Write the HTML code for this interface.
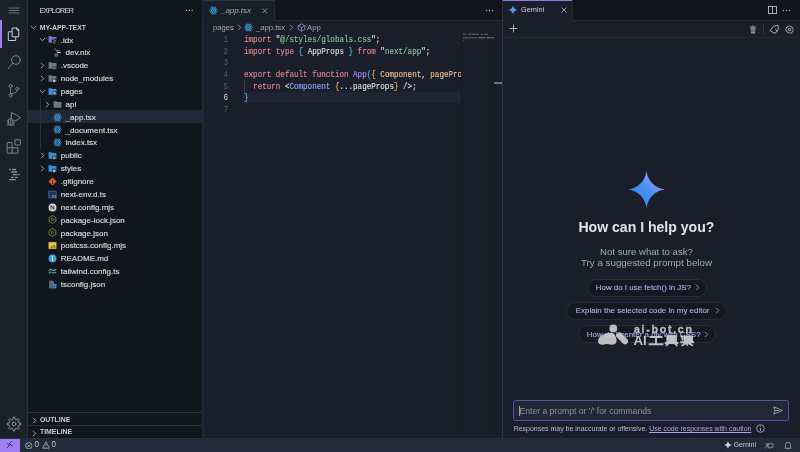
<!DOCTYPE html>
<html><head><meta charset="utf-8"><style>
*{box-sizing:border-box;margin:0;padding:0}
html,body{width:800px;height:452px;overflow:hidden;background:#1a1e2a;font-family:"Liberation Sans",sans-serif;}
.a{position:absolute}
.t{position:absolute;white-space:pre;line-height:1}
.row{position:absolute;white-space:pre;font-size:8px;color:#cdd0d6;line-height:12px;-webkit-text-stroke:.2px currentColor}
.code{position:absolute;left:244px;font-family:"Liberation Mono",monospace;font-size:9.2px;line-height:11.7px;white-space:pre;color:#d4d4d4;transform:scaleX(.824);transform-origin:0 0;-webkit-text-stroke:.15px currentColor}
.ln{position:absolute;left:199px;width:29px;text-align:right;font-family:"Liberation Mono",monospace;font-size:9.2px;line-height:11.7px;color:#596071;transform:scaleX(.824);transform-origin:100% 0}
.k{color:#e0848d}.s{color:#7fc79a}.b{color:#5eaee8}.w{color:#dcdfe4}.f{color:#b28cf3}.y{color:#e4b35c}.o{color:#e6c08e}.c{color:#8ea6f4}
</style></head><body><div id="root" style="position:absolute;left:0;top:0;width:800px;height:452px;will-change:transform">
<svg width="0" height="0" style="position:absolute"><defs>
<symbol id="react" viewBox="0 0 16 16"><g fill="none" stroke="#45a4e6" stroke-width="1.25"><ellipse cx="8" cy="8" rx="7.2" ry="2.9"/><ellipse cx="8" cy="8" rx="7.2" ry="2.9" transform="rotate(60 8 8)"/><ellipse cx="8" cy="8" rx="7.2" ry="2.9" transform="rotate(120 8 8)"/></g><circle cx="8" cy="8" r="1.2" fill="#45a4e6"/></symbol>
<symbol id="fgray" viewBox="0 0 16 16"><path d="M1 2.2h5.2l1.5 1.5H15V13.8H1z" fill="#6f7684"/></symbol>
<symbol id="fidx" viewBox="0 0 16 16"><path d="M1 2.2h5.2l1.5 1.5H15V13.8H1z" fill="#8b6fd8"/><circle cx="11.3" cy="10.8" r="4.6" fill="#11151c"/><path d="M8.6 7.6l5 2.4" stroke="#3fb6c9" stroke-width="1.5"/><path d="M13.6 10.4l-5 2.4" stroke="#5fae5a" stroke-width="1.5"/><path d="M9.5 14.3h4" stroke="#e2b34c" stroke-width="1.2"/></symbol>
<symbol id="nix" viewBox="0 0 16 16"><rect x="2" y="1" width="3" height="2" fill="#7e68d8"/><rect x="5" y="4" width="7" height="2" fill="#4aa8e8"/><rect x="7" y="7" width="7" height="2" fill="#e8b34a"/><rect x="3" y="10" width="6" height="2" fill="#48a868"/><rect x="2" y="13" width="7" height="2" fill="#7e68d8"/></symbol>
<symbol id="fvs" viewBox="0 0 16 16"><path d="M1 2.2h5.2l1.5 1.5H15V13.8H1z" fill="#6f7684"/><circle cx="11" cy="12" r="3.6" fill="#131720"/><circle cx="11" cy="12" r="2.2" fill="none" stroke="#c2c6ce" stroke-width="1.3"/></symbol>
<symbol id="fnode" viewBox="0 0 16 16"><path d="M1 2.2h5.2l1.5 1.5H15V13.8H1z" fill="#6f7684"/><circle cx="11" cy="12" r="3.8" fill="#131720"/><path d="M8.5 10.5l2.5-1.5 2.5 1.5v3l-2.5 1.5-2.5-1.5z" fill="#c2c6ce"/></symbol>
<symbol id="fpages" viewBox="0 0 16 16"><path d="M1 2.2h5.2l1.5 1.5H15V13.8H1z" fill="#3d8fd6"/><rect x="8.5" y="8" width="6" height="7" fill="#131720"/><path d="M9.5 9h4v5.5l-2-1.5-2 1.5z" fill="#7fc4f2"/></symbol>
<symbol id="fpublic" viewBox="0 0 16 16"><path d="M1 2.2h5.2l1.5 1.5H15V13.8H1z" fill="#3d8fd6"/><circle cx="11" cy="12" r="4" fill="#131720"/><circle cx="11" cy="12" r="2.8" fill="#7fc4f2"/><path d="M8.5 12h5M11 9.5v5" stroke="#3d6f9a" stroke-width=".7"/></symbol>
<symbol id="fstyles" viewBox="0 0 16 16"><path d="M1 2.2h5.2l1.5 1.5H15V13.8H1z" fill="#3d8fd6"/><circle cx="11" cy="12" r="4" fill="#131720"/><circle cx="11" cy="12" r="2.8" fill="#7fc4f2"/></symbol>
<symbol id="git" viewBox="0 0 16 16"><path d="M8 1l7 7-7 7-7-7z" fill="#e05a2b"/><path d="M6.5 5l3 3M8 8v3.5" stroke="#131720" stroke-width="1.1"/><circle cx="8" cy="11.3" r="1" fill="#131720"/></symbol>
<symbol id="ts" viewBox="0 0 16 16"><rect x="1.5" y="2" width="13" height="12" fill="#1d3550" stroke="#3b78c4" stroke-width="1.3"/><path d="M8 13V9.5h3M9.5 9.5V13M14 9.5h-2v1.7h2V13h-2" stroke="#7fb0e8" stroke-width="1" fill="none"/></symbol>
<symbol id="next" viewBox="0 0 16 16"><circle cx="8" cy="8" r="7" fill="#d6d9de"/><path d="M5.5 11.5v-7l5 7v-7" stroke="#131720" stroke-width="1.4" fill="none"/></symbol>
<symbol id="node" viewBox="0 0 16 16"><path d="M8 1l6 3.5v7L8 15l-6-3.5v-7z" fill="none" stroke="#7aa43c" stroke-width="1.4"/><path d="M6.5 11V5.5c2.5 0 3.5.8 3.5 2s-1 2-3.5 2" stroke="#7aa43c" stroke-width="1.2" fill="none"/></symbol>
<symbol id="js" viewBox="0 0 16 16"><rect x="1" y="2" width="14" height="12" fill="#f0c43c"/><path d="M7 8v4H5M10 12h2v-2h-2V8h2" stroke="#2a2a2a" stroke-width="1.1" fill="none"/></symbol>
<symbol id="info" viewBox="0 0 16 16"><circle cx="8" cy="8" r="7" fill="#3d9be9"/><rect x="7.1" y="6.5" width="1.8" height="5.5" fill="#fff"/><circle cx="8" cy="4.4" r="1.1" fill="#fff"/></symbol>
<symbol id="tw" viewBox="0 0 16 16"><path d="M1.5 7c1.5-3 3.5-3.5 6-1.8s4 1.5 7-1.2M1.5 11.5c1.5-3 3.5-3.5 6-1.8s4 1.5 7-1.2" fill="none" stroke="#4db6ac" stroke-width="1.8"/></symbol>
<symbol id="tscfg" viewBox="0 0 16 16"><path d="M2 1h6l3 3v3H8v8H2z" fill="#5f6675"/><rect x="8" y="7" width="7" height="8" fill="#3d8fd6"/><path d="M9.5 10h3M11 10v4" stroke="#1d3a5a" stroke-width=".9"/></symbol>
</defs></svg>
<div class="a" style="left:0;top:0;width:27px;height:438px;background:#1b202b"></div>
<div class="a" style="left:27px;top:0;width:1px;height:438px;background:#2a2f3b"></div>
<div class="a" style="left:0;top:20px;width:1.6px;height:28px;background:#a27ef5"></div>
<svg class="a" style="left:0;top:0" width="27" height="438" viewBox="0 0 27 438" fill="none" stroke="#7d8492" stroke-width="1" stroke-linejoin="round" stroke-linecap="round">
  <path d="M9 8h10M9 10.5h10M9 13h10" stroke="#6c7382"/>
  <g stroke="#c9cdd5">
    <path d="M12.5 28h4.3l2 2v6.8h-6.3z"/>
    <path d="M16.8 28v2h2"/>
    <path d="M11.7 31.8h-3.4v8.7h7.4v-3.1"/>
  </g>
  <circle cx="15.9" cy="60" r="4.3"/>
  <path d="M12.7 63.3L8.2 68.8"/>
  <circle cx="10.6" cy="86" r="1.5"/><circle cx="10.6" cy="95.6" r="1.5"/><circle cx="17.3" cy="88.7" r="1.5"/>
  <path d="M10.6 87.5v6.6M17.3 90.2c0 2.3-1.5 2.6-6.6 3.6"/>
  <path d="M11.3 117.6V112.3l9.4 5.3-5.3 3.3"/>
  <path d="M8.6 119.8a2.4 2.4 0 0 1 4.4 0v3.4a2.2 2.2 0 0 1-4.4 0z M10.8 119.4v5.6M7.2 120.8h1.4M13 120.8h1.4M7.2 122.8h1.4M13 122.8h1.4M7.4 125h1.4M12.8 125h1.4"/>
  <path d="M7.5 142.6h4.6v10.5H7.5zM7.5 147.8h10.4v5.3h-5.8M15.3 139.8h5v5.2h-5z"/>
  <g stroke-width="1.3" stroke="#8b919c">
  <path d="M9.7 169.5h.6M12.5 169.5h3M11.5 172h5.3M13.4 174.6h3.5M18.6 174.6h.6M11.5 177.3h2M15.6 177.3h1.6M9.7 179.7h5.6"/>
  </g>
  <circle cx="14" cy="424" r="1.9" stroke="#8b919c"/>
  <path d="M13.02 419.10 L13.09 417.26 L14.91 417.26 L14.98 419.10 L16.78 419.84 L18.13 418.59 L19.41 419.87 L18.16 421.22 L18.90 423.02 L20.74 423.09 L20.74 424.91 L18.90 424.98 L18.16 426.78 L19.41 428.13 L18.13 429.41 L16.78 428.16 L14.98 428.90 L14.91 430.74 L13.09 430.74 L13.02 428.90 L11.22 428.16 L9.87 429.41 L8.59 428.13 L9.84 426.78 L9.10 424.98 L7.26 424.91 L7.26 423.09 L9.10 423.02 L9.84 421.22 L8.59 419.87 L9.87 418.59 L11.22 419.84Z" stroke="#8b919c"/>
</svg>
<div class="a" style="left:28px;top:0;width:174px;height:438px;background:#11151c"></div>
<div class="a" style="left:202px;top:0;width:2px;height:438px;background:#222733"></div>
<div class="t" style="left:39.5px;top:7.3px;font-size:7px;letter-spacing:-.55px;color:#bfc3cb;-webkit-text-stroke:.15px currentColor">EXPLORER</div>
<svg class="a" style="left:184px;top:8px" width="10" height="5"><circle cx="2.4" cy="2.4" r=".7" fill="#c0c4cc"/><circle cx="5.3" cy="2.4" r=".7" fill="#c0c4cc"/><circle cx="8.2" cy="2.4" r=".7" fill="#c0c4cc"/></svg>
<div class="a" style="left:28px;top:110.12px;width:174px;height:12.8px;background:#212938"></div>
<div class="a" style="left:40.3px;top:97.76px;width:1px;height:51.44px;background:#2a2f3a"></div>
<svg class="a" style="left:30px;top:25.00px" width="7" height="5"><path d="M.8 1l2.7 2.7L6.2 1" fill="none" stroke="#aeb3bc" stroke-width=".9"/></svg>
<div class="t" style="left:39.7px;top:24.50px;font-size:6.9px;font-weight:bold;color:#c8ccd3">MY-APP-TEXT</div>
<svg class="a" style="left:39.00px;top:37.36px" width="7" height="5"><path d="M.8 1l2.7 2.7L6.2 1" fill="none" stroke="#aeb3bc" stroke-width=".9"/></svg>
<svg class="a" style="left:48.00px;top:35.36px" width="9" height="9"><use href="#fidx"/></svg>
<div class="row" style="left:60.75px;top:34.61px">.idx</div>
<svg class="a" style="left:52.80px;top:48.22px" width="9" height="9"><use href="#nix"/></svg>
<div class="row" style="left:65.55px;top:47.47px">dev.nix</div>
<svg class="a" style="left:40.00px;top:62.08px" width="5" height="7"><path d="M1 .8l2.7 2.7L1 6.2" fill="none" stroke="#aeb3bc" stroke-width=".9"/></svg>
<svg class="a" style="left:48.00px;top:61.08px" width="9" height="9"><use href="#fvs"/></svg>
<div class="row" style="left:60.75px;top:60.33px">.vscode</div>
<svg class="a" style="left:40.00px;top:74.94px" width="5" height="7"><path d="M1 .8l2.7 2.7L1 6.2" fill="none" stroke="#aeb3bc" stroke-width=".9"/></svg>
<svg class="a" style="left:48.00px;top:73.94px" width="9" height="9"><use href="#fnode"/></svg>
<div class="row" style="left:60.75px;top:73.19px">node_modules</div>
<svg class="a" style="left:39.00px;top:88.80px" width="7" height="5"><path d="M.8 1l2.7 2.7L6.2 1" fill="none" stroke="#aeb3bc" stroke-width=".9"/></svg>
<svg class="a" style="left:48.00px;top:86.80px" width="9" height="9"><use href="#fpages"/></svg>
<div class="row" style="left:60.75px;top:86.05px">pages</div>
<svg class="a" style="left:44.80px;top:100.66px" width="5" height="7"><path d="M1 .8l2.7 2.7L1 6.2" fill="none" stroke="#aeb3bc" stroke-width=".9"/></svg>
<svg class="a" style="left:52.80px;top:99.66px" width="9" height="9"><use href="#fgray"/></svg>
<div class="row" style="left:65.55px;top:98.91px">api</div>
<svg class="a" style="left:52.80px;top:112.52px" width="9" height="9"><use href="#react"/></svg>
<div class="row" style="left:65.55px;top:111.77px">_app.tsx</div>
<svg class="a" style="left:52.80px;top:125.38px" width="9" height="9"><use href="#react"/></svg>
<div class="row" style="left:65.55px;top:124.63px">_document.tsx</div>
<svg class="a" style="left:52.80px;top:138.24px" width="9" height="9"><use href="#react"/></svg>
<div class="row" style="left:65.55px;top:137.49px">index.tsx</div>
<svg class="a" style="left:40.00px;top:152.10px" width="5" height="7"><path d="M1 .8l2.7 2.7L1 6.2" fill="none" stroke="#aeb3bc" stroke-width=".9"/></svg>
<svg class="a" style="left:48.00px;top:151.10px" width="9" height="9"><use href="#fpublic"/></svg>
<div class="row" style="left:60.75px;top:150.35px">public</div>
<svg class="a" style="left:40.00px;top:164.96px" width="5" height="7"><path d="M1 .8l2.7 2.7L1 6.2" fill="none" stroke="#aeb3bc" stroke-width=".9"/></svg>
<svg class="a" style="left:48.00px;top:163.96px" width="9" height="9"><use href="#fstyles"/></svg>
<div class="row" style="left:60.75px;top:163.21px">styles</div>
<svg class="a" style="left:48.00px;top:176.82px" width="9" height="9"><use href="#git"/></svg>
<div class="row" style="left:60.75px;top:176.07px">.gitignore</div>
<svg class="a" style="left:48.00px;top:189.68px" width="9" height="9"><use href="#ts"/></svg>
<div class="row" style="left:60.75px;top:188.93px">next-env.d.ts</div>
<svg class="a" style="left:48.00px;top:202.54px" width="9" height="9"><use href="#next"/></svg>
<div class="row" style="left:60.75px;top:201.79px">next.config.mjs</div>
<svg class="a" style="left:48.00px;top:215.40px" width="9" height="9"><use href="#node"/></svg>
<div class="row" style="left:60.75px;top:214.65px">package-lock.json</div>
<svg class="a" style="left:48.00px;top:228.26px" width="9" height="9"><use href="#node"/></svg>
<div class="row" style="left:60.75px;top:227.51px">package.json</div>
<svg class="a" style="left:48.00px;top:241.12px" width="9" height="9"><use href="#js"/></svg>
<div class="row" style="left:60.75px;top:240.37px">postcss.config.mjs</div>
<svg class="a" style="left:48.00px;top:253.98px" width="9" height="9"><use href="#info"/></svg>
<div class="row" style="left:60.75px;top:253.23px">README.md</div>
<svg class="a" style="left:48.00px;top:266.84px" width="9" height="9"><use href="#tw"/></svg>
<div class="row" style="left:60.75px;top:266.09px">tailwind.config.ts</div>
<svg class="a" style="left:48.00px;top:279.70px" width="9" height="9"><use href="#tscfg"/></svg>
<div class="row" style="left:60.75px;top:278.95px">tsconfig.json</div>
<div class="a" style="left:28px;top:412px;width:174px;height:1px;background:#2a2f3b"></div>
<div class="a" style="left:28px;top:425px;width:174px;height:1px;background:#2a2f3b"></div>
<svg class="a" style="left:32px;top:416.90px" width="5" height="7"><path d="M1 .8l2.7 2.7L1 6.2" fill="none" stroke="#aeb3bc" stroke-width=".9"/></svg>
<div class="t" style="left:40px;top:416.80px;font-size:6.9px;font-weight:bold;color:#c8ccd3">OUTLINE</div>
<svg class="a" style="left:32px;top:429.50px" width="5" height="7"><path d="M1 .8l2.7 2.7L1 6.2" fill="none" stroke="#aeb3bc" stroke-width=".9"/></svg>
<div class="t" style="left:40px;top:429.40px;font-size:6.9px;font-weight:bold;color:#c8ccd3">TIMELINE</div>
<div class="a" style="left:203px;top:0;width:299px;height:20px;background:#12151c"></div>
<div class="a" style="left:203px;top:20px;width:299px;height:1px;background:#262b36"></div>
<div class="a" style="left:203px;top:0;width:70.5px;height:21px;background:#1a1e2a"></div>
<div class="a" style="left:203px;top:0;width:70.5px;height:1px;background:#2f3440"></div>
<div class="a" style="left:273.5px;top:0;width:1px;height:20px;background:#262b36"></div>
<svg class="a" style="left:209px;top:5.5px" width="9" height="9"><use href="#react"/></svg>
<div class="t" style="left:221px;top:6.6px;font-size:7.9px;font-style:italic;color:#a3a8b1">_app.tsx</div>
<svg class="a" style="left:262px;top:7.8px" width="5.5" height="5.5"><path d="M.5 .5l4.5 4.5M5 .5l-4.5 4.5" stroke="#a3a8b1" stroke-width=".8"/></svg>
<svg class="a" style="left:485px;top:9px" width="10" height="3"><circle cx="1.5" cy="1.5" r=".7" fill="#b0b4bc"/><circle cx="4.5" cy="1.5" r=".7" fill="#b0b4bc"/><circle cx="7.5" cy="1.5" r=".7" fill="#b0b4bc"/></svg>
<div class="t" style="left:213px;top:23.7px;font-size:7.7px;color:#a2a7b0">pages</div>
<svg class="a" style="left:237px;top:23.5px" width="5" height="7"><path d="M1 .8l2.7 2.7L1 6.2" fill="none" stroke="#9ba0a9" stroke-width=".8"/></svg>
<svg class="a" style="left:244px;top:22.5px" width="9" height="9"><use href="#react"/></svg>
<div class="t" style="left:256px;top:23.7px;font-size:7.7px;color:#a2a7b0">_app.tsx</div>
<svg class="a" style="left:289px;top:23.5px" width="5" height="7"><path d="M1 .8l2.7 2.7L1 6.2" fill="none" stroke="#9ba0a9" stroke-width=".8"/></svg>
<svg class="a" style="left:297px;top:22.5px" width="9" height="9" viewBox="0 0 16 16"><path d="M8 1.5l6 3.2v6.6l-6 3.2-6-3.2V4.7z M2 4.7l6 3.3 6-3.3M8 8v6.5" fill="none" stroke="#b28cf3" stroke-width="1.3"/></svg>
<div class="t" style="left:307px;top:23.7px;font-size:7.7px;color:#a2a7b0">App</div>
<div class="a" style="left:243.4px;top:91.6px;width:218.6px;height:11.7px;background:#1e2535"></div>
<div class="a" style="left:244px;top:80px;width:1px;height:11.6px;background:#3a3f4b"></div>
<div class="a" style="left:460.5px;top:33px;width:1.5px;height:405px;background:#151922"></div>
<div class="a" style="left:493.5px;top:33px;width:1px;height:405px;background:#161a23"></div>
<div class="a" style="left:494px;top:82px;width:8px;height:2px;background:#6a707c"></div>
<div class="ln" style="top:33.90px;color:#596071">1</div>
<div class="code" style="top:33.90px"><span class="k">import</span> <span class="w">"</span><span class="s">@/styles/globals.css</span><span class="w">";</span></div>
<div class="ln" style="top:45.60px;color:#596071">2</div>
<div class="code" style="top:45.60px"><span class="k">import</span> <span class="k">type</span> <span class="b">{</span> <span class="w">AppProps</span> <span class="b">}</span> <span class="k">from</span> <span class="w">"</span><span class="s">next/app</span><span class="w">";</span></div>
<div class="ln" style="top:57.30px;color:#596071">3</div>
<div class="ln" style="top:69.00px;color:#596071">4</div>
<div class="code" style="top:69.00px"><span class="k">export</span> <span class="k">default</span> <span class="k">function</span> <span class="f">App</span><span class="b">(</span><span class="y">{</span> <span class="o">Component</span><span class="w">,</span> <span class="o">pageProps</span> <span class="y">})</span> <span class="b">{</span></div>
<div class="ln" style="top:80.70px;color:#596071">5</div>
<div class="code" style="top:80.70px">  <span class="k">return</span> <span class="w">&lt;</span><span class="c">Component</span> <span class="y">{</span><span class="w">...pageProps</span><span class="y">}</span> <span class="w">/&gt;;</span></div>
<div class="ln" style="top:92.40px;color:#d8dbe0">6</div>
<div class="code" style="top:92.40px"><span class="b">}</span></div>
<div class="ln" style="top:104.10px;color:#596071">7</div>
<div class="a" style="left:461.5px;top:21px;width:40.5px;height:417px;background:#1a1e2a"></div>
<div class="a" style="left:460.5px;top:33px;width:1.5px;height:405px;background:#151922"></div>
<div class="a" style="left:493.5px;top:33px;width:1px;height:405px;background:#161a23"></div>
<div class="a" style="left:494px;top:82px;width:8px;height:2px;background:#6a707c"></div>
<svg class="a" style="left:462px;top:32px" width="32" height="10" opacity=".5"><rect x="1" y="1.6" width="3.5" height="1.4" fill="#b86a74"/><rect x="6" y="1.6" width="3" height="1.4" fill="#5f9f78"/><rect x="9.5" y="1.6" width="4" height="1.4" fill="#8a9a90"/><rect x="14" y="1.6" width="3" height="1.4" fill="#5f9f78"/><rect x="18.5" y="1.6" width="2.5" height="1.4" fill="#b86a74"/><rect x="22" y="1.6" width="4" height="1.4" fill="#5f9f78"/><rect x="1" y="5" width="5" height="1.4" fill="#b86a74"/><rect x="6.5" y="5" width="3" height="1.4" fill="#8d7fc8"/><rect x="10" y="5" width="5" height="1.4" fill="#b86a74"/><rect x="16" y="5" width="7.5" height="1.4" fill="#9aa0a8"/><rect x="24.5" y="5" width="5" height="1.4" fill="#c0a070"/><rect x="30" y="5" width="2" height="1.4" fill="#9aa0a8"/><rect x="1" y="7.6" width="1.2" height="1.2" fill="#7a8090"/></svg>
<div class="a" style="left:502px;top:0;width:298px;height:438px;background:#1a1e2a"></div>
<div class="a" style="left:502px;top:0;width:298px;height:20px;background:#12151c"></div>
<div class="a" style="left:502px;top:20px;width:298px;height:1px;background:#262b36"></div>
<div class="a" style="left:502px;top:0;width:70px;height:21px;background:#1a1e2a"></div>
<div class="a" style="left:502px;top:0;width:70px;height:1px;background:#9478e0"></div>
<div class="a" style="left:572px;top:0;width:1px;height:20px;background:#262b36"></div>
<div class="a" style="left:502px;top:0;width:1px;height:438px;background:#2b3241"></div>
<svg class="a" style="left:507.5px;top:5px" width="10" height="10" viewBox="0 0 20 20"><defs><linearGradient id="g2" x1="0" y1="1" x2="1" y2="0"><stop offset="0" stop-color="#3f8cf5"/><stop offset=".6" stop-color="#5a98f2"/><stop offset="1" stop-color="#a08ee8"/></linearGradient></defs><path d="M10 0C10.6 6.2 13.8 9.4 20 10 13.8 10.6 10.6 13.8 10 20 9.4 13.8 6.2 10.6 0 10 6.2 9.4 9.4 6.2 10 0z" fill="url(#g2)"/></svg>
<div class="t" style="left:521px;top:6.2px;font-size:7.3px;color:#d0d3d9">Gemini</div>
<svg class="a" style="left:560.5px;top:7px" width="6" height="6"><path d="M.5 .5l5 5M5.5 .5l-5 5" stroke="#b9bdc5" stroke-width=".8"/></svg>
<svg class="a" style="left:767.5px;top:6px" width="9" height="8"><rect x=".5" y=".5" width="8" height="7" fill="none" stroke="#b9bdc5" stroke-width=".9"/><path d="M4.5 .5v7" stroke="#b9bdc5" stroke-width=".9"/></svg>
<svg class="a" style="left:782px;top:9px" width="10" height="3"><circle cx="1.5" cy="1.5" r=".7" fill="#b9bdc5"/><circle cx="4.5" cy="1.5" r=".7" fill="#b9bdc5"/><circle cx="7.5" cy="1.5" r=".7" fill="#b9bdc5"/></svg>
<div class="a" style="left:503px;top:37px;width:297px;height:1px;background:#262b36"></div>
<svg class="a" style="left:508.5px;top:24px" width="9" height="9"><path d="M4.5 .5v8M.5 4.5h8" stroke="#b9bdc5" stroke-width=".9"/></svg>
<svg class="a" style="left:748.5px;top:24.5px" width="8" height="9" viewBox="0 0 16 18"><path d="M1 4h14M6 4V2h4v2" stroke="#8e949e" stroke-width="1.6" fill="none"/><path d="M3 5h10l-1 12H4z" fill="#8e949e"/><path d="M6 8v6M10 8v6" stroke="#1a1e2a" stroke-width="1.2"/></svg>
<div class="a" style="left:762.5px;top:23px;width:1px;height:11px;background:#2e3440"></div>
<svg class="a" style="left:768.5px;top:24.5px" width="11" height="9" viewBox="0 0 22 18"><path d="M2 10l8-8h9v7l-8 8z" fill="none" stroke="#b9bdc5" stroke-width="1.6" transform="rotate(-10 11 9)"/><path d="M12 8l6 5" stroke="#b9bdc5" stroke-width="1.4"/></svg>
<svg class="a" style="left:784.5px;top:24.5px" width="9" height="9" viewBox="0 0 20 20"><circle cx="10" cy="10" r="2.6" fill="none" stroke="#b9bdc5" stroke-width="1.8"/><path d="M10 1.5l1.7 2.2 2.7-.9.6 2.8 2.8.6-.9 2.7 2.2 1.7-2.2 1.7.9 2.7-2.8.6-.6 2.8-2.7-.9L10 18.5l-1.7-2.2-2.7.9-.6-2.8-2.8-.6.9-2.7L1 10l2.2-1.7-.9-2.7 2.8-.6.6-2.8 2.7.9z" fill="none" stroke="#b9bdc5" stroke-width="1.6"/></svg>
<svg class="a" style="left:628px;top:171px" width="37" height="37" viewBox="0 0 40 40"><defs><linearGradient id="gg" x1="0" y1="1" x2="1" y2="0"><stop offset="0" stop-color="#2d7ff7"/><stop offset=".5" stop-color="#4690f5"/><stop offset="1" stop-color="#c9a0e8"/></linearGradient></defs><path d="M20 0C21.6 11 29 18.4 40 20 29 21.6 21.6 29 20 40 18.4 29 11 21.6 0 20 11 18.4 18.4 11 20 0z" fill="url(#gg)"/></svg>
<div class="t" style="left:578.4px;top:219.6px;font-size:14.07px;font-weight:bold;color:#e1e3e8;width:136px;text-align:center">How can I help you?</div>
<div class="t" style="left:546.5px;top:246.5px;width:200px;text-align:center;font-size:9.6px;color:#a3a8b1">Not sure what to ask?</div>
<div class="t" style="left:546.5px;top:258px;width:200px;text-align:center;font-size:9.77px;color:#a3a8b1">Try a suggested prompt below</div>
<div class="a" style="left:586.75px;top:278.75px;width:120px;height:18px;border:1px solid #282d3b;border-radius:9px;background:#141821"></div>
<div class="t" style="left:595.75px;top:284.45px;font-size:7.95px;color:#bda9f0;-webkit-text-stroke:.1px currentColor">How do I use fetch() in JS?</div>
<svg class="a" style="left:694.95px;top:284.45px" width="5" height="7"><path d="M1 .8l2.7 2.7L1 6.2" fill="none" stroke="#bda9f0" stroke-width=".8"/></svg>
<div class="a" style="left:566.25px;top:301.75px;width:160.5px;height:18px;border:1px solid #282d3b;border-radius:9px;background:#141821"></div>
<div class="t" style="left:575.75px;top:307.45px;font-size:7.95px;color:#bda9f0;-webkit-text-stroke:.1px currentColor">Explain the selected code in my editor</div>
<svg class="a" style="left:714.95px;top:307.45px" width="5" height="7"><path d="M1 .8l2.7 2.7L1 6.2" fill="none" stroke="#bda9f0" stroke-width=".8"/></svg>
<div class="a" style="left:577.5px;top:325px;width:138.25px;height:18px;border:1px solid #282d3b;border-radius:9px;background:#141821"></div>
<div class="t" style="left:586.75px;top:330.70px;font-size:7.95px;color:#bda9f0;-webkit-text-stroke:.1px currentColor">How do I center a div with CSS?</div>
<svg class="a" style="left:703.95px;top:330.70px" width="5" height="7"><path d="M1 .8l2.7 2.7L1 6.2" fill="none" stroke="#bda9f0" stroke-width=".8"/></svg>
<div class="a" style="left:513px;top:399.6px;width:276px;height:21.4px;border:1px solid #5f4fa6;border-radius:2.5px;background:#212735"></div>
<div class="a" style="left:519.3px;top:406px;width:1px;height:10px;background:#9ba0a8"></div>
<div class="t" style="left:519.5px;top:407px;font-size:8.6px;color:#8d929c">Enter a prompt or '/' for commands</div>
<svg class="a" style="left:773px;top:405.5px" width="10" height="9" viewBox="0 0 20 18"><path d="M1.5 1.5L18.5 9 1.5 16.5 4 9z M4 9h8" fill="none" stroke="#b9bdc5" stroke-width="1.5" stroke-linejoin="round"/></svg>
<div class="t" style="left:513.7px;top:425.2px;font-size:6.98px;color:#b9bdc5">Responses may be inaccurate or offensive. <span style="color:#b79cf0;text-decoration:underline">Use code responses with caution</span></div>
<svg class="a" style="left:755.5px;top:424.3px" width="9" height="9"><circle cx="4.5" cy="4.5" r="3.8" fill="none" stroke="#b0b4bc" stroke-width=".8"/><path d="M4.5 4v2.8" stroke="#b0b4bc" stroke-width=".9"/><circle cx="4.5" cy="2.6" r=".5" fill="#b0b4bc"/></svg>
<div class="a" style="left:0;top:438px;width:800px;height:14px;background:#222938;border-top:1px solid #2b3142"></div>
<div class="a" style="left:0;top:438.8px;width:20px;height:13.2px;background:#a27ef5"></div>
<svg class="a" style="left:0;top:436px" width="20" height="16"><path d="M11.7 5.3L9.4 7.9 12.4 9.8M7.2 7.6L9.6 9 7.3 11.8" stroke="#3a2d66" stroke-width="1" fill="none" stroke-linecap="round" stroke-linejoin="round"/></svg>
<svg class="a" style="left:25px;top:441.5px" width="7.5" height="7.5"><circle cx="3.75" cy="3.75" r="3.2" fill="none" stroke="#aeb3bc" stroke-width=".8"/><path d="M2.3 2.3l2.9 2.9M5.2 2.3l-2.9 2.9" stroke="#aeb3bc" stroke-width=".7"/></svg>
<div class="t" style="left:34.6px;top:441.2px;font-size:8.2px;color:#c0c4cb">0</div>
<svg class="a" style="left:41.5px;top:441px" width="8" height="8"><path d="M4 .8L7.5 7.2H.5z" fill="none" stroke="#aeb3bc" stroke-width=".8"/><path d="M4 3v2.3M4 6v.5" stroke="#aeb3bc" stroke-width=".7"/></svg>
<div class="t" style="left:51.6px;top:441.2px;font-size:8.2px;color:#c0c4cb">0</div>
<svg class="a" style="left:723.5px;top:441px" width="8" height="8" viewBox="0 0 20 20"><path d="M10 0C10.8 5.5 14.5 9.2 20 10 14.5 10.8 10.8 14.5 10 20 9.2 14.5 5.5 10.8 0 10 5.5 9.2 9.2 5.5 10 0z" fill="#d0d3d9"/></svg>
<div class="t" style="left:733.5px;top:441.8px;font-size:7.1px;color:#c8cbd1">Gemini</div>
<svg class="a" style="left:765px;top:441px" width="9" height="8" viewBox="0 0 18 16"><path d="M6 5.5h10v7h-4l-3 2.5v-2.5H6z" fill="none" stroke="#b0b4bc" stroke-width="1.3"/><circle cx="4" cy="7" r="2" fill="none" stroke="#b0b4bc" stroke-width="1.3"/><path d="M1 15c0-3 1.5-4.5 3-4.5s2 .5 2.5 1" fill="none" stroke="#b0b4bc" stroke-width="1.3"/></svg>
<svg class="a" style="left:783.5px;top:441px" width="8" height="9" viewBox="0 0 16 18"><path d="M3 13V7.5a5 5 0 0 1 10 0V13l1.5 1.5h-13z M6.5 16h3" fill="none" stroke="#b0b4bc" stroke-width="1.4"/></svg>
<svg class="a" style="left:590px;top:318px" width="110" height="32" viewBox="590 318 110 32"><g fill="#d0d0d4" fill-opacity=".9"><circle cx="613.3" cy="328.4" r="3.9"/><path d="M598 341C598 336 606 332.6 611.5 332.8 614.5 333 616.6 337 616.6 341 616.6 344 613 345.3 610.5 344.5 608.5 343.9 607 343.6 605 344.3 602 345.5 598 344.6 598 341Z"/><path d="M619.4 335.6L624.9 341.2" stroke="#d0d0d4" stroke-opacity=".9" stroke-width="6.2" stroke-linecap="round"/></g><g fill="none" stroke="#cfcfd3" stroke-opacity=".92" stroke-width="1.9"><path d="M649.5 337h13M656 337v7.2M648.6 344.2h14.8"/><path d="M667.3 336.2h8.6v5.8h-8.6zM667.3 338.2h8.6M667.3 340.1h8.6M664.8 343h13.6M668.4 343.8l-2.6 1.9M674.8 343.8l2.6 1.9"/><path d="M682.5 335.4v5.2M681 337.5l1.5-2M683.8 336.4h9.2M683.8 338.3h9.2M683.8 340.2h9.2M687.8 335.4v5M680.3 342.3h13.8M687.2 340.5v5.3M686.5 342.8l-4.8 2.9M688 342.8l4.8 2.9"/></g></svg>
<div class="t" style="left:634px;top:323.6px;font-size:10.6px;font-weight:bold;color:rgba(205,205,210,.88);letter-spacing:1.72px;-webkit-text-stroke:.3px currentColor">ai-bot.cn</div>
<div class="t" style="left:633.6px;top:334px;font-size:13.2px;font-weight:bold;color:rgba(208,208,212,.92)">AI</div>
</div></body></html>
